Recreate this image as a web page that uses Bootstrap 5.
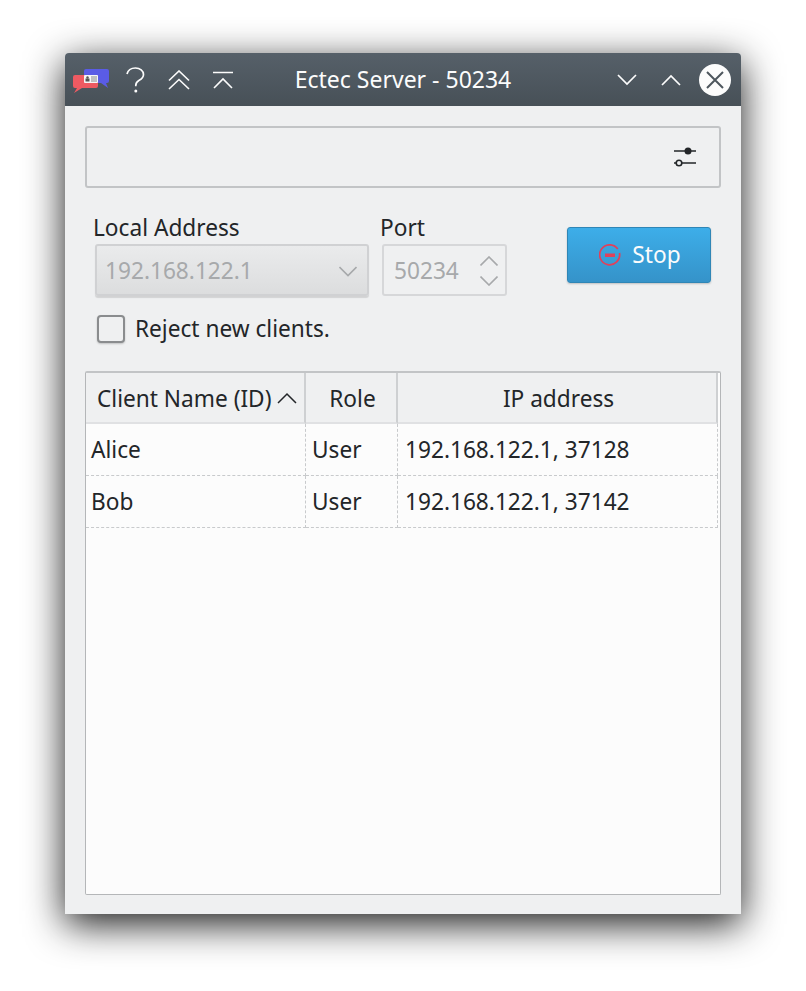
<!DOCTYPE html>
<html lang="en">
<head>
    <meta charset="UTF-8">
    <meta name="viewport" content="width=device-width, initial-scale=1.0">
    <title>Ectec Server - 50234</title>
    <link href="https://cdn.jsdelivr.net/npm/bootstrap@5.3.0/dist/css/bootstrap.min.css" rel="stylesheet">
    <style>
        body {
            font-family: "Noto Sans", sans-serif;
            font-size: 22.67px;
            line-height: 30px;
            color: #232629;
            background: #fff;
            padding: 53px 0 77px 65px;
        }
        .app-window {
            width: 676px;
            height: 861px;
            background: #eff0f1;
            border-radius: 4px 4px 0 0;
            box-shadow: 0 10px 38px rgba(0, 0, 0, .9);
        }
        .title-bar {
            height: 53px;
            padding: 0 10px 0 8px;
            background: linear-gradient(#566069, #475057);
            border-radius: 4px 4px 0 0;
            color: #fcfcfc;
        }
        .title-bar svg { display: block; flex: none; }
        .title-side { flex: 1 1 0; }
        .title-text { font-size: 23px; padding: 0 0 1px 2px; }
        .content-area { padding: 20px 20px 19px; height: 808px; }
        .search-box {
            height: 62px;
            padding-right: 23px;
            border: 2px solid #c2c4c6;
            border-radius: 3px;
        }
        .form-area { height: 183px; padding: 25px 10px 0 8px; }
        .field-label { height: 30px; }
        .address-col { width: 276px; margin-right: 11px; }
        .port-col { width: 127px; margin-right: 59px; }
        .address-box {
            height: 52px;
            margin: 1px 0 0 2px;
            width: 274px;
            padding: 2px 10px 0 8px;
            color: #a7a9ab;
            background: linear-gradient(#eaebec, #dcddde);
            border: 2px solid #d0d1d3;
            border-radius: 3px;
            box-shadow: 0 2px 1px rgba(0, 0, 0, .12);
        }
        .port-box {
            height: 52px;
            margin: 1px 0 0 2px;
            width: 125px;
            padding: 2px 7px 0 10px;
            color: #a7a9ab;
            border: 2px solid #d6d7d9;
            border-radius: 3px;
        }
        .spin-arrows { gap: 10px; }
        .stop-btn {
            width: 144px;
            height: 56px;
            margin: 14px 0 0 1px;
            padding: 0 0 0 2px;
            color: #fcfcfc;
            font-size: 22.67px;
            background: linear-gradient(#3daee9, #3593c9);
            border: 1px solid #2f86b6;
            border-radius: 3px;
            box-shadow: 0 1px 2px rgba(0, 0, 0, .2);
        }
        .stop-btn:hover { color: #fcfcfc; background: linear-gradient(#3daee9, #3593c9); border-color: #2f86b6; }
        .check-row { margin: 18px 0 0 4px; gap: 10px; height: 30px; }
        .check-square {
            width: 28px;
            height: 28px;
            background: #eff0f1;
            border: 2px solid #8a8c8e;
            border-radius: 4px;
            box-shadow: 0 1px 2px rgba(0, 0, 0, .2);
            appearance: none;
            margin: 0;
        }
        .clients-frame {
            height: 524px;
            background: #fcfcfc;
            border: 1px solid #b4b6b8;
            border-top: 2px solid #c2c4c6;
            border-radius: 2px;
        }
        .clients-table {
            table-layout: fixed;
            border-collapse: separate;
            border-spacing: 0;
            width: 632px;
            font-size: 22.67px;
        }
        .clients-table th {
            height: 51px;
            padding: 2px 0 0 3px;
            font-weight: 400;
            text-align: center;
            background: #eff0f1;
            border-right: 2px solid #ced0d2;
            border-bottom: 2px solid #e0e1e3;
        }
        .clients-table th.name-col { text-align: left; padding-left: 11px; white-space: nowrap; }
        .clients-table th.name-col svg { margin-left: 6px; vertical-align: 3px; }
        .clients-table td {
            height: 52px;
            padding: 0 0 0 6px;
            background: #fcfcfc;
            border-right: 1px dashed #c8cacc;
            border-bottom: 1px dashed #c8cacc;
        }
        .clients-table td:first-child { padding-left: 5px; }
        .clients-table td:last-child { padding-left: 7px; }
    </style>
</head>
<body>
    <div class="app-window">
        <div class="title-bar d-flex align-items-center">
            <div class="title-side d-flex align-items-center">
                <svg width="37" height="26" viewBox="0 0 37 26" style="margin-right: 15px">
                    <path d="M11 4a2 2 0 0 1 2-2h21a2 2 0 0 1 2 2v10a2 2 0 0 1-2 2h-1l2 5-7-5H13a2 2 0 0 1-2-2z" fill="#5a5ce6"/>
                    <path d="M2 8h21a2 2 0 0 1 2 2v9a2 2 0 0 1-2 2H9l-8 5 3-5H2a2 2 0 0 1-2-2v-9a2 2 0 0 1 2-2z" fill="#ee5a62"/>
                    <rect x="11" y="8" width="14" height="8" rx="1" fill="#f6f6f8"/>
                    <circle cx="14.500" cy="10.500" r="1.200" fill="#555"/>
                    <rect x="12.500" y="11.500" width="4" height="3" fill="#555"/>
                    <path d="M18 10h6M18 12h6M18 14h6" stroke="#8a8a8a" stroke-width="1"/>
                </svg>
                <svg width="22" height="26" viewBox="0 0 22 26" style="margin-right: 21px">
                    <path d="M2 7C3 3 6.500 1 10.500 1c4.500 0 8 2.800 8 6.500 0 3-2 4.500-4.300 5.800-2.200 1.300-3.400 2.600-3.400 5v1" fill="none" stroke="#fcfcfc" stroke-width="1.700"/>
                    <circle cx="10.800" cy="24" r="1.500" fill="#fcfcfc"/>
                </svg>
                <svg width="22" height="20" viewBox="0 0 22 20" style="margin-right: 22px">
                    <path d="M1 10.500 11 1l10 9.500M1 19 11 9.500 21 19" fill="none" stroke="#fcfcfc" stroke-width="1.600"/>
                </svg>
                <svg width="22" height="18" viewBox="0 0 22 18">
                    <path d="M1 1.500h20M2 17l9-9 9 9" fill="none" stroke="#fcfcfc" stroke-width="1.600"/>
                </svg>
            </div>
            <div class="title-text">Ectec Server - 50234</div>
            <div class="title-side d-flex align-items-center justify-content-end">
                <svg width="22" height="12" viewBox="0 0 22 12" style="margin-right: 22px">
                    <path d="M2 1l9 9 9-9" fill="none" stroke="#fcfcfc" stroke-width="1.700"/>
                </svg>
                <svg width="22" height="12" viewBox="0 0 22 12" style="margin-right: 17px">
                    <path d="M2 11l9-9 9 9" fill="none" stroke="#fcfcfc" stroke-width="1.700"/>
                </svg>
                <svg width="32" height="32" viewBox="0 0 32 32">
                    <circle cx="16" cy="16" r="16" fill="#fcfcfc"/>
                    <path d="M8 8l16 16M24 8 8 24" stroke="#4d565d" stroke-width="2"/>
                </svg>
            </div>
        </div>

        <div class="content-area">
            <div class="search-box d-flex align-items-center justify-content-end">
                <svg width="22" height="20" viewBox="0 0 22 20">
                    <path d="M0 4h22M0 16h22" stroke="#232629" stroke-width="1.600"/>
                    <circle cx="14" cy="4" r="3.500" fill="#232629"/>
                    <circle cx="5" cy="16" r="2.800" fill="#eff0f1" stroke="#232629" stroke-width="1.600"/>
                </svg>
            </div>

            <div class="form-area">
                <div class="d-flex align-items-start">
                    <div class="address-col">
                        <div class="field-label">Local Address</div>
                        <div class="address-box d-flex align-items-center justify-content-between">
                            <span>192.168.122.1</span>
                            <svg width="18" height="11" viewBox="0 0 18 11">
                                <path d="M.500 1l8.500 8.500L17.500 1" fill="none" stroke="#a7a9ab" stroke-width="1.600"/>
                            </svg>
                        </div>
                    </div>
                    <div class="port-col">
                        <div class="field-label">Port</div>
                        <div class="port-box d-flex align-items-center justify-content-between">
                            <span>50234</span>
                            <div class="spin-arrows d-flex flex-column">
                                <svg class="d-block" width="18" height="10" viewBox="0 0 18 10">
                                    <path d="M.500 9.500 9 1l8.500 8.500" fill="none" stroke="#a7a9ab" stroke-width="1.600"/>
                                </svg>
                                <svg class="d-block" width="18" height="10" viewBox="0 0 18 10">
                                    <path d="M.500.500 9 9l8.500-8.500" fill="none" stroke="#a7a9ab" stroke-width="1.600"/>
                                </svg>
                            </div>
                        </div>
                    </div>
                    <button class="btn stop-btn d-flex align-items-center justify-content-center" type="button">
                        <svg width="22" height="22" viewBox="0 0 22 22" style="margin-right: 11px">
                            <path d="M18.800 5A10 10 0 1 0 20.500 9" fill="none" stroke="#e2405a" stroke-width="1.700"/>
                            <rect x="6" y="9.500" width="10" height="3.500" fill="#e2405a"/>
                        </svg>
                        Stop
                    </button>
                </div>
                <div class="check-row d-flex align-items-center">
                    <input class="check-square" type="checkbox" id="rejectNew">
                    <label for="rejectNew">Reject new clients.</label>
                </div>
            </div>

            <div class="clients-frame">
                <table class="clients-table">
                    <colgroup>
                        <col style="width: 220px">
                        <col style="width: 92px">
                        <col style="width: 320px">
                    </colgroup>
                    <thead>
                        <tr>
                            <th class="name-col">Client Name (ID)<svg width="20" height="12" viewBox="0 0 20 12"><path d="M1 11l9-9 9 9" fill="none" stroke="#232629" stroke-width="1.500"/></svg></th>
                            <th>Role</th>
                            <th>IP address</th>
                        </tr>
                    </thead>
                    <tbody>
                        <tr>
                            <td>Alice</td>
                            <td>User</td>
                            <td>192.168.122.1, 37128</td>
                        </tr>
                        <tr>
                            <td>Bob</td>
                            <td>User</td>
                            <td>192.168.122.1, 37142</td>
                        </tr>
                    </tbody>
                </table>
            </div>
        </div>
    </div>
    <script src="https://cdn.jsdelivr.net/npm/bootstrap@5.3.0/dist/js/bootstrap.bundle.min.js"></script>
</body>
</html>
